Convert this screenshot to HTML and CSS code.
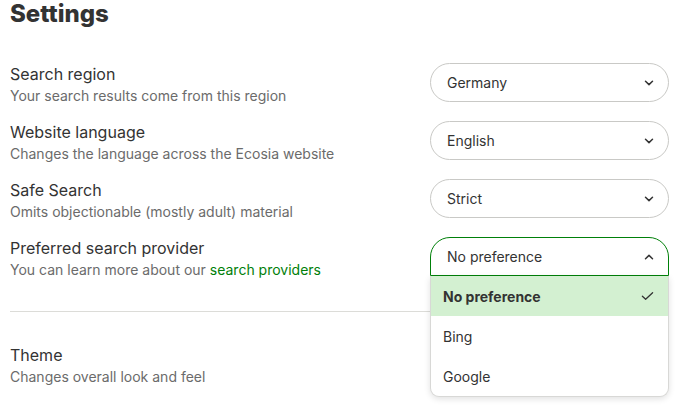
FILE: index.html
```html
<!DOCTYPE html>
<html lang="en">
<head>
<meta charset="utf-8">
<title>Settings</title>
<link rel="stylesheet" href="styles.css">
</head>
<body>
<main class="settings">
  <h1 class="title">Settings</h1>
  <div class="rows">
    <div class="row">
      <div class="info">
        <div class="label">Search region</div>
        <div class="desc">Your search results come from this region</div>
      </div>
      <div class="select"><span>Germany</span><svg class="chev" viewBox="0 0 10 6"><path d="M1.5 1.2 5 4.6 8.5 1.2"/></svg></div>
    </div>
    <div class="row">
      <div class="info">
        <div class="label">Website language</div>
        <div class="desc">Changes the language across the Ecosia website</div>
      </div>
      <div class="select"><span>English</span><svg class="chev" viewBox="0 0 10 6"><path d="M1.5 1.2 5 4.6 8.5 1.2"/></svg></div>
    </div>
    <div class="row">
      <div class="info">
        <div class="label">Safe Search</div>
        <div class="desc">Omits objectionable (mostly adult) material</div>
      </div>
      <div class="select"><span>Strict</span><svg class="chev" viewBox="0 0 10 6"><path d="M1.5 1.2 5 4.6 8.5 1.2"/></svg></div>
    </div>
    <div class="row">
      <div class="info">
        <div class="label">Preferred search provider</div>
        <div class="desc">You can learn more about our <a href="#" class="link">search providers</a></div>
      </div>
      <div class="select-wrap">
        <div class="select open"><span>No preference</span><svg class="chev" viewBox="0 0 10 6"><path d="M1.5 4.8 5 1.4 8.5 4.8"/></svg></div>
        <ul class="menu">
          <li class="opt selected"><span>No preference</span><svg class="check" viewBox="0 0 14 10"><path d="M1.5 5.2 5 8.5 12.5 1.5"/></svg></li>
          <li class="opt">Bing</li>
          <li class="opt">Google</li>
        </ul>
      </div>
    </div>
  </div>
  <hr class="divider">
  <div class="row">
    <div class="info">
      <div class="label">Theme</div>
      <div class="desc">Changes overall look and feel</div>
    </div>
    <div class="select"><span class="hidden-value">System default</span><svg class="chev" viewBox="0 0 10 6"><path d="M1.5 1.2 5 4.6 8.5 1.2"/></svg></div>
  </div>
</main>
</body>
</html>
```
FILE: styles.css
```css
* { box-sizing: border-box; }
html, body { margin: 0; padding: 0; background: #fff; }
body {
  font-family: Inter, "Noto Sans", "Liberation Sans", sans-serif;
  color: #333;
  min-height: 410px;
}
.settings {
  padding: 0 18px 40px 10px;
}
.title {
  margin: 0;
  font-size: 24px;
  line-height: 28px;
  font-weight: 800;
  color: #333;
}
.rows {
  display: flex;
  flex-direction: column;
  gap: 19px;
  margin-top: 35px;
}
.row {
  display: flex;
  align-items: flex-start;
  justify-content: space-between;
  height: 39px;
}
.info {
  display: flex;
  flex-direction: column;
}
.label {
  font-size: 16px;
  line-height: 22px;
  color: #333;
}
.desc {
  font-size: 14px;
  line-height: 22px;
  color: #6b6b6b;
}
.link {
  color: #008009;
  text-decoration: none;
}
.select-wrap {
  position: relative;
  width: 239px;
  z-index: 2;
}
.select {
  width: 239px;
  height: 39px;
  border: 1px solid #c9c9c6;
  border-radius: 20px;
  display: flex;
  align-items: center;
  justify-content: space-between;
  padding: 0 14px 0 16px;
  font-size: 14px;
  color: #333;
  background: #fff;
}
.select.open {
  border-color: #008009;
  border-radius: 20px 20px 0 0;
}
.hidden-value {
  visibility: hidden;
}
.chev {
  width: 10px;
  height: 6px;
  fill: none;
  stroke: #333;
  stroke-width: 1.5;
  stroke-linecap: round;
  stroke-linejoin: round;
}
.menu {
  position: absolute;
  top: 39px;
  left: 0;
  width: 239px;
  margin: 0;
  padding: 0;
  list-style: none;
  background: #fff;
  border: 1px solid #d8d8d6;
  border-top: none;
  border-radius: 0 0 9px 9px;
  box-shadow: 0 2px 6px rgba(0, 0, 0, 0.12);
  overflow: hidden;
}
.opt {
  height: 40px;
  display: flex;
  align-items: center;
  justify-content: space-between;
  padding: 0 14px 0 12px;
  font-size: 14px;
  color: #333;
}
.opt.selected {
  background: #d3f0d1;
  font-weight: 700;
}
.check {
  width: 13px;
  height: 10px;
  fill: none;
  stroke: #333;
  stroke-width: 1.4;
  stroke-linecap: round;
  stroke-linejoin: round;
}
.divider {
  border: none;
  border-top: 1px solid #dcdcd8;
  margin: 35px 0 32px 0;
}
```
